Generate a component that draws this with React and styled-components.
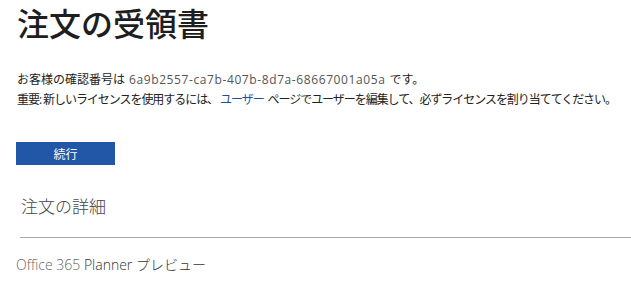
import styled, { createGlobalStyle } from 'styled-components';

const GlobalStyle = createGlobalStyle`
  body {
    margin: 0;
    background: #ffffff;
    font-family: "Open Sans", "Noto Sans CJK JP", sans-serif;
    color: #222222;
  }
`;

const Page = styled.div`
  padding: 0 0 0 16px;
`;

const Title = styled.h1`
  margin: 0;
  padding-top: 2px;
  padding-left: 1px;
  font-family: "Noto Sans CJK JP", sans-serif;
  font-size: 32px;
  line-height: 40px;
  font-weight: 500;
  color: #1e1e1e;
`;

const Message = styled.div`
  margin-top: 28px;
  padding-left: 1px;
  font-size: 12px;
  line-height: 20px;
  color: #222222;
`;

const Line = styled.p`
  margin: 0;
  white-space: nowrap;
  letter-spacing: ${({ tight }) => (tight ? '-1.05px' : '0')};
`;

const Code = styled.span`
  color: #555555;
  margin: 0 4px;
  letter-spacing: 0.6px;
`;

const Link = styled.a`
  color: #1e4e9c;
  text-decoration: none;
  margin: 0 4px 0 2px;
`;

const Button = styled.button`
  display: block;
  margin-top: 32px;
  width: 99px;
  height: 23px;
  border: none;
  background: #2256a6;
  color: #ffffff;
  font-family: "Noto Sans CJK JP", sans-serif;
  font-size: 12px;
  padding: 0;
`;

const SectionTitle = styled.h2`
  margin: 26px 0 0 5px;
  font-family: "Noto Sans CJK JP", sans-serif;
  font-size: 17px;
  line-height: 30px;
  font-weight: 300;
  color: #444444;
`;

const Divider = styled.hr`
  margin: 16px 0 0 4px;
  border: none;
  border-top: 1px solid #a8a8a8;
`;

const Product = styled.div`
  margin-top: 17px;
  font-size: 14px;
  line-height: 20px;
  font-weight: 300;
  color: #666666;
`;

const ProductName = styled.span`
  color: #333333;
`;

const App = () => (
  <>
    <GlobalStyle />
    <Page>
      <Title>注文の受領書</Title>
      <Message>
        <Line>
          お客様の確認番号は<Code>6a9b2557-ca7b-407b-8d7a-68667001a05a</Code>です。
        </Line>
        <Line tight>
          重要: 新しいライセンスを使用するには、<Link href="#">ユーザー</Link>ページでユーザーを編集して、必ずライセンスを割り当ててください。
        </Line>
      </Message>
      <Button>続行</Button>
      <SectionTitle>注文の詳細</SectionTitle>
      <Divider />
      <Product>
        Office 365 <ProductName>Planner プレビュー</ProductName>
      </Product>
    </Page>
  </>
);

export default App;
